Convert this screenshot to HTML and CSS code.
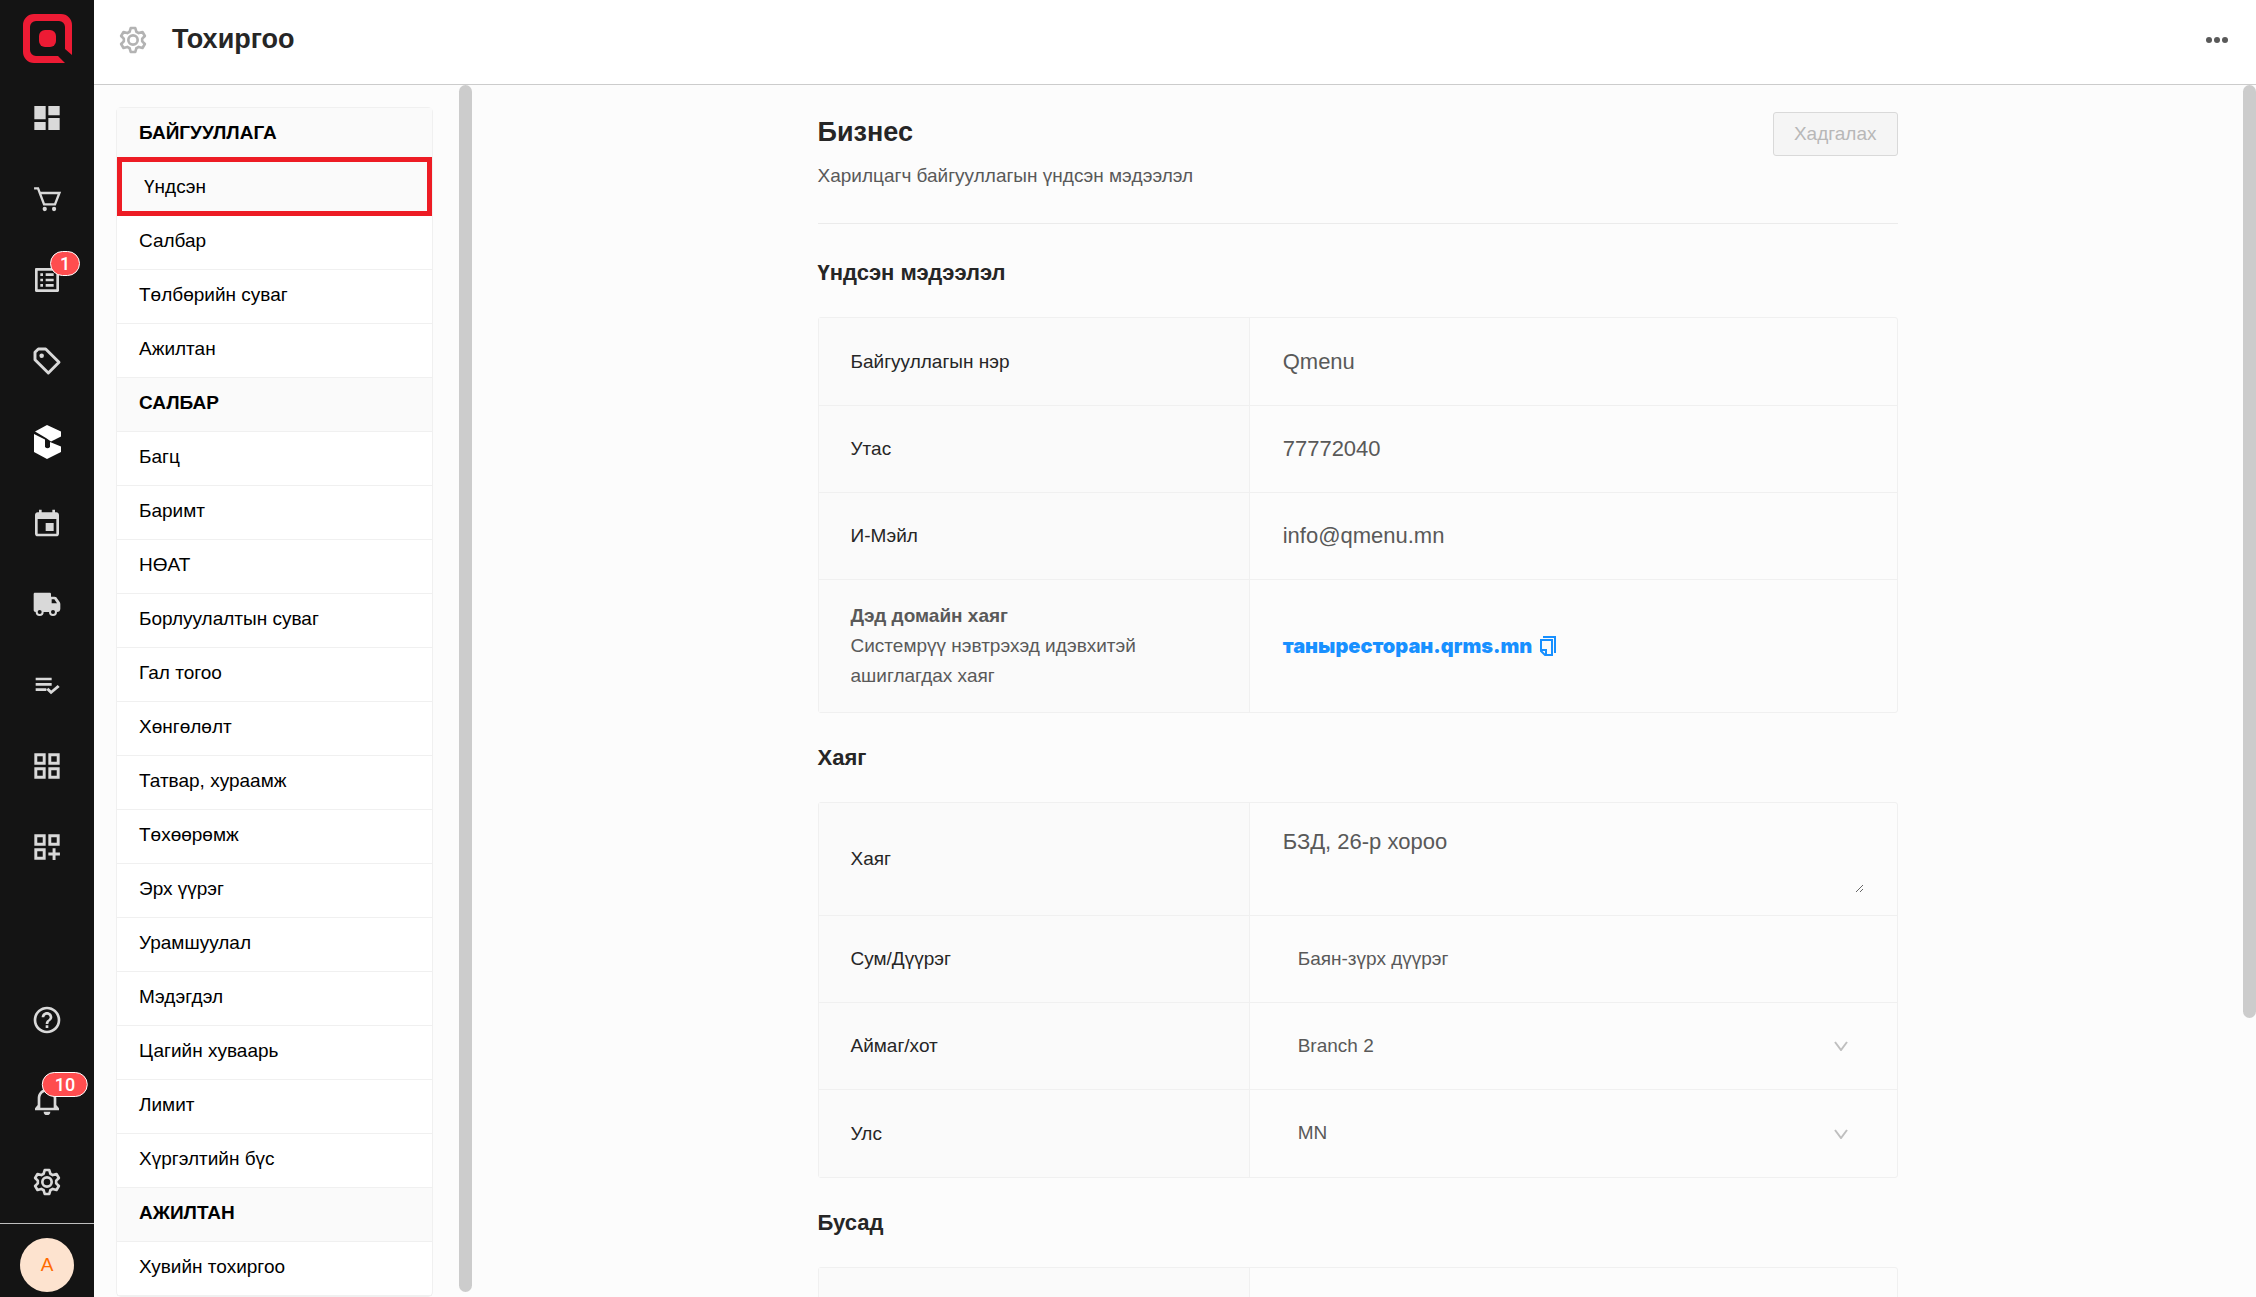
FILE: index.html
```
<!DOCTYPE html>
<html lang="mn">
<head>
  <meta charset="UTF-8" />
  <meta name="viewport" content="width=device-width, initial-scale=1.0"/>
  <title>Тохиргоо</title>
  <link rel="stylesheet" href="styles.css">
</head>
<body>
  <!-- Icon sidebar -->
  <nav class="sidebar">
    <a href="#" class="logo" aria-label="Qmenu">
      <svg viewBox="0 0 49 49" width="49" height="49" fill="#ed1b34">
        <path fill-rule="evenodd" d="M11 0H38A11 11 0 0 1 49 11V41L42 35V13A6 6 0 0 0 36 7H13A6 6 0 0 0 7 13V36A6 6 0 0 0 13 42H35L42 49H11A11 11 0 0 1 0 38V11A11 11 0 0 1 11 0Z"/>
        <rect x="16" y="16" width="17" height="17" rx="6"/>
      </svg>
    </a>
    <ul class="side-list">
      <li><a href="#" aria-label="Хянах самбар"><svg class="icon" viewBox="0 0 24 24"><path d="M2.500 3h8.500v10H2.500zM13 3h8.500v7H13zM2.500 15h8.500v6H2.500zM13 12h8.500v9H13z"/></svg></a></li>
      <li><a href="#" aria-label="Сагс"><svg class="icon" viewBox="0 0 24 24"><path fill="none" stroke="#d9d9d9" stroke-width="1.800" d="M2.300 4h3l4.500 12H18l3.300-8.500H6.600"/><circle cx="10.300" cy="19.500" r="1.600"/><circle cx="17.300" cy="19.500" r="1.600"/></svg></a></li>
      <li><a href="#" aria-label="Захиалга"><svg class="icon" viewBox="0 0 24 24"><path d="M11 7h6v2h-6zm0 4h6v2h-6zm0 4h6v2h-6zM7 7h2v2H7zm0 4h2v2H7zm0 4h2v2H7zM20.100 3H3.900c-.5 0-.9.4-.9.9v16.200c0 .4.4.9.9.9h16.200c.4 0 .9-.5.9-.9V3.900c0-.5-.5-.9-.9-.9M19 19H5V5h14z"/></svg><span class="badge">1</span></a></li>
      <li><a href="#" aria-label="Шошго"><svg class="icon" viewBox="0 0 24 24"><path fill="none" stroke="#d9d9d9" stroke-width="2.200" stroke-linejoin="round" d="M3 5.500L5.500 3H11l10 10-8 8L3 11z"/><circle cx="8" cy="8" r="1.700"/></svg></a></li>
      <li><a href="#" aria-label="Бараа"><svg class="icon cube" viewBox="0 0 27 34"><path d="M1 6.500L13 0l14 6.500v5L17 16.500l-5-3.500zM0 9l11 5.500V22q2.500 2.500 5 0v-5l11 4.500V27l-14 7-13-7z"/></svg></a></li>
      <li><a href="#" aria-label="Хуанли"><svg class="icon" viewBox="0 0 24 24"><path d="M19 4h-1V2h-2v2H8V2H6v2H5c-1.110 0-1.990.9-1.990 2L3 20c0 1.100.890 2 2 2h14c1.100 0 2-.9 2-2V6c0-1.100-.9-2-2-2m0 16H5V9h14zM11 12h6v6h-6z"/></svg></a></li>
      <li><a href="#" aria-label="Хүргэлт"><svg class="icon" viewBox="0 0 24 24"><path d="M21.500 10.500L19 7c-.4-.4-1-.5-2-.5h-2v-2c0-.6-.4-1-1-1H3c-.6 0-1 .4-1 1v12C2 17.500 2.500 18 3.500 18a3 3 0 0 0 6 0h4a3 3 0 0 0 6 0c1.500 0 2.500-1 2.500-2.500V12c0-.6-.2-1.100-.5-1.500M6.500 19.500a1.500 1.500 0 1 1 0-3 1.500 1.500 0 0 1 0 3m10 0a1.500 1.500 0 1 1 0-3 1.500 1.500 0 0 1 0 3m-1-8v-3h2l2 3z"/></svg></a></li>
      <li><a href="#" aria-label="Жагсаалт"><svg class="icon" viewBox="0 0 24 24"><path d="M3.500 6.500h12v2h-12zM3.500 10.500h12v2h-12zM3.500 14.500h8v2h-8zM20 12l1.500 1.500-6.500 5.500-3.500-3.500L13 14l2.200 2.200z"/></svg></a></li>
      <li><a href="#" aria-label="Апп"><svg class="icon" viewBox="0 0 24 24"><path fill-rule="evenodd" d="M2.500 2.500H11V11H2.500zM13 2.500h8.500V11H13zM2.500 13H11v8.500H2.500zM13 13h8.500v8.500H13zM4.700 4.700v4.100h4.100V4.700zM15.200 4.700v4.100h4.100V4.700zM4.700 15.200v4.100h4.100v-4.100zM15.200 15.200v4.100h4.100v-4.100z"/></svg></a></li>
      <li><a href="#" aria-label="Апп нэмэх"><svg class="icon" viewBox="0 0 24 24"><path fill-rule="evenodd" d="M2.500 2.500H11V11H2.500zM13 2.500h8.500V11H13zM2.500 13H11v8.500H2.500zM4.700 4.700v4.100h4.100V4.700zM15.200 4.700v4.100h4.100V4.700zM4.700 15.200v4.100h4.100v-4.100zM16.200 13h2.200v3.200h3.300v2.200h-3.300v3.300h-2.200v-3.300H13v-2.200h3.200z"/></svg></a></li>
    </ul>
    <ul class="side-list side-bottom">
      <li><a href="#" aria-label="Тусламж"><svg class="icon" viewBox="0 0 24 24"><path d="M11 18h2v-2h-2zm1-16C6.480 2 2 6.480 2 12s4.480 10 10 10 10-4.480 10-10S17.520 2 12 2m0 18c-4.410 0-8-3.590-8-8s3.590-8 8-8 8 3.590 8 8-3.590 8-8 8m0-14c-2.210 0-4 1.790-4 4h2c0-1.100.9-2 2-2s2 .9 2 2c0 2-3 1.750-3 5h2c0-2.250 3-2.500 3-5 0-2.210-1.790-4-4-4"/></svg></a></li>
      <li><a href="#" aria-label="Мэдэгдэл"><svg class="icon" viewBox="0 0 24 24"><path d="M12 1a2 2 0 0 1 1.500 2C17 4 19 6.500 19 10v5l2 2.500V19H3v-1.500L5 15v-5c0-3.500 2-6 5.500-7A2 2 0 0 1 12 1M12 5c-3 0-5 2-5 5v7h10v-7c0-3-2-5-5-5M9.500 20h5a2.500 2.500 0 0 1-5 0"/></svg><span class="badge badge-wide">10</span></a></li>
      <li><a href="#" aria-label="Тохиргоо"><svg class="icon gear" viewBox="0 0 24 24"><path d="M10.300 3h3.400l.8 2.800 1.800 1 2.800-.8 1.800 3-2 2v2l2 2-1.800 3-2.800-.8-1.800 1-.8 2.800h-3.400l-.8-2.800-1.800-1-2.800.8-1.800-3 2-2v-2l-2-2 1.800-3 2.800.8 1.800-1z"/><circle cx="12" cy="12" r="3.500"/></svg></a></li>
    </ul>
    <div class="profile">
      <button class="avatar">A</button>
    </div>
  </nav>

  <div class="main">
    <header class="topbar">
      <svg class="icon gear" viewBox="0 0 24 24"><path d="M10.300 3h3.400l.8 2.800 1.800 1 2.800-.8 1.800 3-2 2v2l2 2-1.800 3-2.800-.8-1.800 1-.8 2.800h-3.400l-.8-2.800-1.800-1-2.800.8-1.800-3 2-2v-2l-2-2 1.800-3 2.800.8 1.800-1z"/><circle cx="12" cy="12" r="3.500"/></svg>
      <h1>Тохиргоо</h1>
      <button class="more-btn" aria-label="Бусад"><svg viewBox="0 0 22 6" width="22" height="6"><circle cx="3" cy="3" r="3"/><circle cx="11" cy="3" r="3"/><circle cx="19" cy="3" r="3"/></svg></button>
    </header>

    <div class="body-row">
      <!-- Settings menu -->
      <aside class="menu-pane">
        <ul class="menu">
          <li class="menu-title">БАЙГУУЛЛАГА</li>
          <li class="active"><a href="#">Үндсэн</a></li>
          <li><a href="#">Салбар</a></li>
          <li><a href="#">Төлбөрийн суваг</a></li>
          <li><a href="#">Ажилтан</a></li>
          <li class="menu-title">САЛБАР</li>
          <li><a href="#">Багц</a></li>
          <li><a href="#">Баримт</a></li>
          <li><a href="#">НӨАТ</a></li>
          <li><a href="#">Борлуулалтын суваг</a></li>
          <li><a href="#">Гал тогоо</a></li>
          <li><a href="#">Хөнгөлөлт</a></li>
          <li><a href="#">Татвар, хураамж</a></li>
          <li><a href="#">Төхөөрөмж</a></li>
          <li><a href="#">Эрх үүрэг</a></li>
          <li><a href="#">Урамшуулал</a></li>
          <li><a href="#">Мэдэгдэл</a></li>
          <li><a href="#">Цагийн хуваарь</a></li>
          <li><a href="#">Лимит</a></li>
          <li><a href="#">Хүргэлтийн бүс</a></li>
          <li class="menu-title">АЖИЛТАН</li>
          <li><a href="#">Хувийн тохиргоо</a></li>
        </ul>
        <div class="scrollbar"><div class="thumb menu-thumb"></div></div>
      </aside>

      <!-- Business form -->
      <main class="content">
        <form class="form">
          <div class="form-header">
            <div>
              <h2>Бизнес</h2>
              <p>Харилцагч байгууллагын үндсэн мэдээлэл</p>
            </div>
            <button type="submit" class="save-btn" disabled>Хадгалах</button>
          </div>

          <h3>Үндсэн мэдээлэл</h3>
          <div class="card">
            <div class="row">
              <label for="name">Байгууллагын нэр</label>
              <div class="field"><input type="text" id="name" value="Qmenu" /></div>
            </div>
            <div class="row">
              <label for="phone">Утас</label>
              <div class="field"><input type="text" id="phone" value="77772040" /></div>
            </div>
            <div class="row">
              <label for="email">И-Мэйл</label>
              <div class="field"><input type="text" id="email" value="info@qmenu.mn" /></div>
            </div>
            <div class="row domain-row">
              <div class="label">
                <strong>Дэд домайн хаяг</strong>
                <span>Системрүү нэвтрэхэд идэвхитэй ашиглагдах хаяг</span>
              </div>
              <div class="field">
                <a href="#" class="domain">таныресторан.qrms.mn</a>
                <button type="button" class="copy-btn" aria-label="Хуулах"><svg viewBox="0 0 16 20" width="16" height="20"><path d="M3 1h12v16M1 4h11v15H5l-4-4zM1 14h5v5"/></svg></button>
              </div>
            </div>
          </div>

          <h3>Хаяг</h3>
          <div class="card">
            <div class="row address-row">
              <label for="address">Хаяг</label>
              <div class="field"><textarea id="address">БЗД, 26-р хороо</textarea></div>
            </div>
            <div class="row">
              <label for="district">Сум/Дүүрэг</label>
              <div class="field"><input type="text" id="district" class="small" value="Баян-зүрх дүүрэг" /></div>
            </div>
            <div class="row">
              <label for="city">Аймаг/хот</label>
              <div class="field select">
                <select id="city"><option>Branch 2</option></select>
                <svg class="arrow" viewBox="0 0 14 10" width="14" height="10"><path d="M1 1l6 8 6-8"/></svg>
              </div>
            </div>
            <div class="row">
              <label for="country">Улс</label>
              <div class="field select">
                <select id="country"><option>MN</option></select>
                <svg class="arrow" viewBox="0 0 14 10" width="14" height="10"><path d="M1 1l6 8 6-8"/></svg>
              </div>
            </div>
          </div>

          <h3>Бусад</h3>
          <div class="card">
            <div class="row">
              <div class="label"></div>
              <div class="field"></div>
            </div>
          </div>
        </form>
        <div class="scrollbar"><div class="thumb content-thumb"></div></div>
      </main>
    </div>
  </div>
</body>
</html>
```
FILE: styles.css
```
* {
  margin: 0;
  padding: 0;
  font-family: 'Liberation Sans', Arial, sans-serif;
  box-sizing: border-box;
}

body {
  display: flex;
  height: 100vh;
  overflow: hidden;
  background: #fcfcfc;
  color: #262626;
  font-size: 19px;
}

ul {
  list-style: none;
}

a {
  color: inherit;
  text-decoration: none;
}

button {
  border: none;
  background: none;
  cursor: pointer;
}

.icon {
  width: 32px;
  height: 32px;
  fill: #d9d9d9;
}

.gear {
  fill: none;
  stroke: #d9d9d9;
  stroke-width: 2;
  stroke-linejoin: round;
}

/* Icon sidebar */
.sidebar {
  display: flex;
  flex-direction: column;
  flex-shrink: 0;
  width: 94px;
  background: #141414;
}

.logo {
  display: flex;
  justify-content: center;
  padding: 14px 0 14px 1px;
}

.side-list a {
  display: flex;
  align-items: center;
  justify-content: center;
  position: relative;
  height: 81px;
}

.side-bottom {
  margin-top: auto;
  padding-bottom: 1px;
}

.side-list .cube {
  width: 27px;
  height: 34px;
  fill: #fff;
}

.badge {
  position: absolute;
  left: 65px;
  top: 12px;
  transform: translateX(-50%);
  min-width: 30px;
  height: 25px;
  border: 1px solid #fff;
  border-radius: 13px;
  background: #ff4d4f;
  color: #fff;
  font-family: Roboto, sans-serif;
  font-size: 18px;
  font-weight: 500;
  line-height: 23px;
  text-align: center;
}

.badge-wide {
  padding: 0 12px;
}

.profile {
  display: flex;
  justify-content: center;
  padding: 14px 0 5px;
  border-top: 1px solid #bfbfbf;
}

.avatar {
  width: 54px;
  height: 54px;
  border-radius: 50%;
  background: #fde3cf;
  color: #ff6a00;
  font-size: 19px;
}

.main {
  display: flex;
  flex-direction: column;
  flex: 1;
  min-width: 0;
}

.topbar {
  display: flex;
  align-items: center;
  flex-shrink: 0;
  height: 85px;
  padding: 0 28px 5px 23px;
  border-bottom: 1px solid #ccc;
  background: #fff;
}

.topbar .gear {
  stroke: #b3b3b3;
}

h1 {
  margin-left: 23px;
  font-size: 27px;
}

h2 {
  font-size: 27px;
  line-height: 40px;
}

h3 {
  padding: 28px 0 27px;
  font-size: 22px;
  line-height: 34px;
}

.more-btn {
  display: flex;
  margin-left: auto;
  fill: #595959;
}

.body-row {
  display: flex;
  flex: 1;
  min-height: 0;
  overflow: hidden;
}

/* Settings menu */
.menu-pane {
  display: flex;
  flex-shrink: 0;
  width: 378px;
  padding-left: 22px;
  overflow: hidden;
}

.menu {
  flex: 1;
  align-self: flex-start;
  margin: 22px 26px 0 0;
  border: 1px solid #f0f0f0;
  border-radius: 5px;
  background: #fff;
  color: #000;
}

.menu li {
  height: 54px;
  padding: 0 22px;
  border-bottom: 1px solid #f0f0f0;
  line-height: 50px;
}

.menu a {
  display: block;
}

.menu .menu-title {
  background: #fafafa;
  font-weight: bold;
}

.menu .menu-title:first-child {
  height: 49px;
  border-bottom: none;
}

.menu .active {
  height: 59px;
  border: 5px solid #ed1c24;
  background: #fafafa;
}

.scrollbar {
  flex-shrink: 0;
  width: 13px;
}

.thumb {
  border-radius: 7px;
  background: #ccc;
}

.menu-thumb {
  height: calc(100% - 5px);
}

.content-thumb {
  height: 77%;
}

/* Business form */
.content {
  display: flex;
  flex: 1;
  min-width: 0;
  overflow: hidden;
}

.form {
  width: 1080px;
  margin: 0 auto;
}

.form-header {
  display: flex;
  justify-content: space-between;
  align-items: flex-start;
  margin-bottom: 4px;
  padding: 27px 0 32px;
  border-bottom: 1px solid #ebebeb;
}

.form-header p {
  margin-top: 8px;
  color: #595959;
  line-height: 31px;
}

.save-btn {
  height: 44px;
  padding: 0 20px;
  border: 1px solid #d9d9d9;
  border-radius: 3px;
  background: #f5f5f5;
  color: #b8b8b8;
  font-size: 19px;
}

.card {
  border: 1px solid #f0f0f0;
  border-radius: 3px;
}

.row {
  display: grid;
  grid-template-columns: 2fr 3fr;
  min-height: 87px;
  border-bottom: 1px solid #f0f0f0;
}

.row:first-child {
  min-height: 88px;
}

.row:last-child {
  border-bottom: none;
}

.row > label,
.row > .label {
  display: flex;
  flex-direction: column;
  justify-content: center;
  padding: 0 32px;
  border-right: 1px solid #f0f0f0;
  background: #fafafa;
}

.row > .label {
  color: #595959;
  line-height: 30px;
}

.field {
  display: flex;
  align-items: center;
  padding: 0 33px;
  color: #595959;
}

input,
textarea,
select {
  width: 100%;
  border: none;
  outline: none;
  background: transparent;
  color: #595959;
  font-size: 22px;
}

input.small,
select {
  padding-left: 15px;
  font-size: 19px;
}

select {
  padding-bottom: 2px;
  appearance: none;
}

.row.domain-row {
  min-height: 132px;
}

.row.address-row {
  min-height: 113px;
}

textarea {
  height: 68px;
  line-height: 34px;
  resize: vertical;
}

.select {
  position: relative;
}

.arrow {
  position: absolute;
  right: 49px;
  fill: none;
  stroke: #bfbfbf;
  stroke-width: 2;
}

.domain {
  color: #1890ff;
  font-family: Inter, sans-serif;
  font-size: 20px;
  font-weight: 900;
}

.copy-btn {
  display: flex;
  margin-left: 8px;
  fill: none;
  stroke: #1890ff;
  stroke-width: 2;
}
```
